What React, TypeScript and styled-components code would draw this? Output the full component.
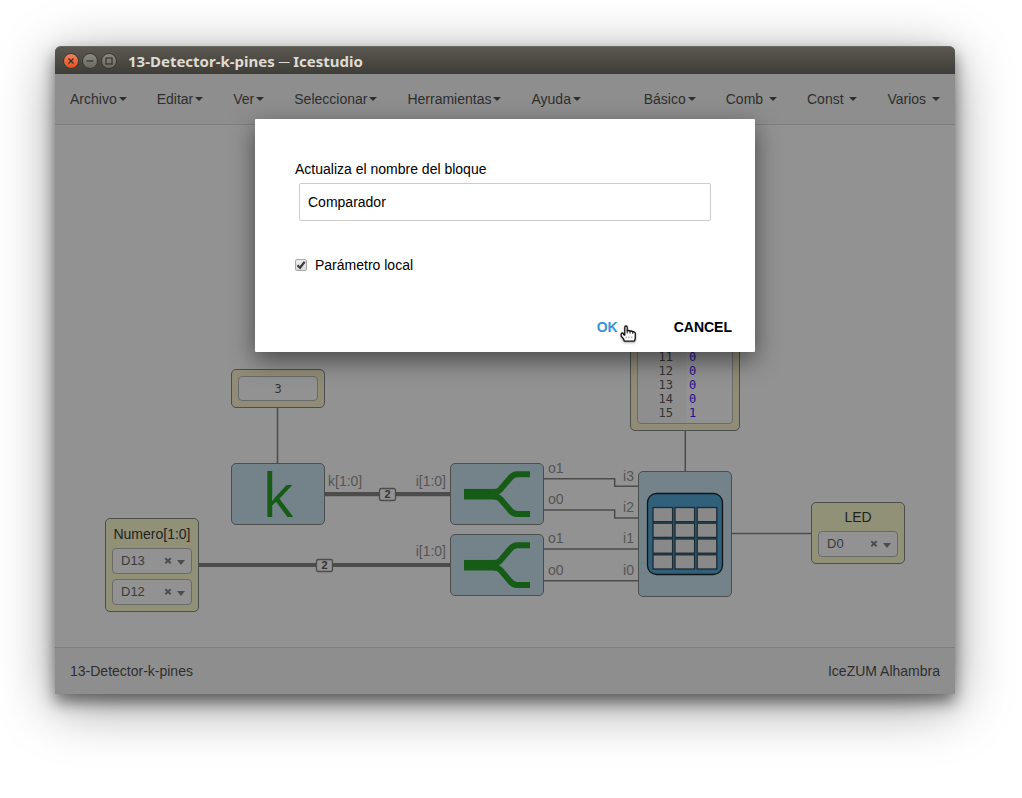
import React, { useState } from "react";
import styled, { createGlobalStyle } from "styled-components";

const GlobalStyle = createGlobalStyle`
  * { box-sizing: border-box; }
  body {
    margin: 0;
    background: #fff;
    font-family: "Liberation Sans", Arial, sans-serif;
    font-size: 14px;
    line-height: 20px;
  }
  button, input, select { font: inherit; }
`;

const Desktop = styled.div`
  display: flex;
  min-height: 100vh;
  padding: 46px 67px 104px 55px;
  overflow: hidden;
`;

const AppWindow = styled.div`
  position: relative;
  display: flex;
  flex: 1;
  flex-direction: column;
  min-width: 0;
  border-radius: 6px 6px 0 0;
  background: #929292;
  box-shadow: 0 8px 16px rgba(0, 0, 0, 0.5), 0 12px 56px rgba(0, 0, 0, 0.4);
`;

const TitleBar = styled.header`
  display: flex;
  align-items: center;
  gap: 3px;
  height: 28px;
  padding: 0 8px;
  border-radius: 6px 6px 0 0;
  border-top: 1px solid #6a6860;
  background: linear-gradient(#5a5850, #3e3d37);
`;

const WindowButton = styled.button<{ $close?: boolean }>`
  display: grid;
  place-items: center;
  width: 16px;
  height: 16px;
  padding: 0;
  border: 1px solid #3a3934;
  border-radius: 50%;
  color: #33322e;
  background: ${(p) => (p.$close ? "linear-gradient(#f3815c, #e2501f)" : "linear-gradient(#8b8a82, #6a6962)")};
`;

const Title = styled.h1`
  margin: 0 0 0 8px;
  color: #dfdbd2;
  font: bold 15px/20px "Noto Sans", "Open Sans", sans-serif;
`;

const MenuBar = styled.nav`
  display: flex;
  justify-content: space-between;
  height: 51px;
  border-bottom: 1px solid #7d7d7d;
  background: #8e8e8e;
`;

const MenuGroup = styled.div`
  display: flex;
`;

const MenuButton = styled.button`
  display: flex;
  align-items: center;
  padding: 0 15px;
  border: 0;
  background: none;
  color: #2e2e2e;
  white-space: pre;
`;

const Caret = styled.span`
  margin-left: 2px;
  border: 4px solid transparent;
  border-top-color: currentColor;
  border-bottom: 0;
`;

const Canvas = styled.main`
  position: relative;
  flex: 1;
  min-height: 522px;
  overflow: hidden;
`;

const Wiring = styled.svg`
  position: absolute;
  left: 0;
  top: 0;
  width: 900px;
  height: 522px;
  font-size: 14px;
`;

const nodeFill = { io: "#909177", constant: "#918c77", block: "#74838a" };

const Node = styled.section<{
  $x: number;
  $y: number;
  $w?: number;
  $h: number;
  $kind: keyof typeof nodeFill;
}>`
  position: absolute;
  left: ${(p) => p.$x}px;
  top: ${(p) => p.$y}px;
  display: flex;
  flex-direction: column;
  align-items: center;
  justify-content: flex-end;
  gap: 5px;
  width: ${(p) => p.$w ?? 94}px;
  height: ${(p) => p.$h}px;
  padding: ${(p) => (p.$kind === "block" ? 0 : 6)}px;
  border: 1px solid #4c4e4e;
  border-radius: 5px;
  background: ${(p) => nodeFill[p.$kind]};
  color: #222;
`;

const NodeName = styled.span`
  line-height: 18px;
  white-space: nowrap;
`;

const ConstantInput = styled.input`
  width: 100%;
  height: 26px;
  padding: 0;
  border: 1px solid #6a6a6a;
  border-radius: 4px;
  background: #929292;
  color: #333;
  text-align: center;
  font: 12px "DejaVu Sans Mono", monospace;
`;

const PinField = styled.div`
  position: relative;
  width: 100%;
  height: 26px;
`;

const PinSelect = styled.select`
  width: 100%;
  height: 26px;
  padding: 0 8px;
  appearance: none;
  border: 1px solid #6a6a6a;
  border-radius: 4px;
  background: #929292;
  color: #3a3a3a;
  font-size: 13px;
`;

const PinTools = styled.div`
  position: absolute;
  right: 7px;
  top: 0;
  display: flex;
  align-items: center;
  gap: 5px;
  height: 26px;
  color: #4c4c4c;
  pointer-events: none;
`;

const ClearButton = styled.button`
  display: flex;
  padding: 0;
  border: 0;
  background: none;
  color: inherit;
`;

const BlockLetter = styled.span`
  width: 100%;
  color: #165c16;
  text-align: center;
  font: 60px/60px "Open Sans", "Noto Sans", sans-serif;
`;

const BlockArt = styled.svg`
  width: 100%;
  height: 100%;
`;

const Memory = styled.div`
  display: grid;
  grid-template-columns: 48px 1fr;
  width: 96px;
  height: 80px;
  padding-bottom: 3px;
  border: 1px solid #6a6a6a;
  border-radius: 4px;
  background: linear-gradient(90deg, #8e8e8e 48px, #929292 48px);
  align-content: end;
  font: 12px/14px "DejaVu Sans Mono", monospace;
`;

const LineNumber = styled.span`
  padding-right: 13px;
  color: #333;
  text-align: right;
`;

const MemoryValue = styled.span`
  padding-left: 3px;
  color: #22118a;
`;

const StatusBar = styled.footer`
  display: flex;
  align-items: center;
  justify-content: space-between;
  height: 47px;
  padding: 0 15px;
  border-top: 1px solid #7d7d7d;
  background: #8e8e8e;
  color: #2e2e2e;
`;

const Dialog = styled.form`
  position: absolute;
  top: 73px;
  left: 50%;
  display: flex;
  flex-direction: column;
  width: 500px;
  padding: 40px 14px 10px 40px;
  border-radius: 1px;
  background: #fff;
  color: #000;
  box-shadow: 0 8px 24px rgba(0, 0, 0, 0.5);
  transform: translateX(-50%);
`;

const NameInput = styled.input`
  width: 412px;
  height: 38px;
  margin: 4px 4px 34px;
  padding: 0 8px;
  border: 1px solid #ccc;
  border-radius: 2px;
  outline: 0;
  color: #000;
`;

const CheckLabel = styled.label`
  display: flex;
  align-items: center;
  gap: 8px;
`;

const CheckBox = styled.input`
  width: 12px;
  height: 12px;
  margin: 0;
  appearance: none;
  border: 1px solid #a8a8a8;
  border-radius: 2px;
  background: linear-gradient(#eee, #dcdcdc);
`;

const CheckSlot = styled.span`
  display: grid;
  place-items: center;

  > * { grid-area: 1 / 1; }
  svg { pointer-events: none; }
`;

const Actions = styled.div`
  display: flex;
  justify-content: flex-end;
  gap: 38px;
  margin-top: 37px;
`;

const ActionButton = styled.button<{ $primary?: boolean }>`
  padding: 5px 9px;
  border: 0;
  background: none;
  color: ${(p) => (p.$primary ? "#3594d6" : "#000")};
  font-weight: bold;
  line-height: 20px;
`;

const Pointer = styled.svg`
  position: absolute;
  left: 365px;
  top: 206px;
  width: 18px;
  height: 18px;
  filter: drop-shadow(0 1px 1px rgba(0, 0, 0, 0.35));
  pointer-events: none;
`;

const Menu = ({ label }: { label: string }) => (
  <MenuButton type="button">
    {label}
    <Caret />
  </MenuButton>
);

const Pin = ({ value, label }: { value: string; label: string }) => (
  <PinField>
    <PinSelect aria-label={label} defaultValue={value}>
      <option>{value}</option>
    </PinSelect>
    <PinTools>
      <ClearButton type="button" aria-label="×">
        <svg width="8" height="8" viewBox="0 0 8 8">
          <path d="M1.3 1.3 6.7 6.2M6.7 1.3 1.3 6.2" stroke="currentColor" strokeWidth="1.9" />
        </svg>
      </ClearButton>
      <svg width="8" height="8" viewBox="0 0 8 8">
        <path d="M0 3h8L4 8z" fill="currentColor" />
      </svg>
    </PinTools>
  </PinField>
);

const SplitArt = () => (
  <BlockArt viewBox="0 0 92 60">
    <path d="M13 30.2H45" stroke="#165c16" strokeWidth="10.6" />
    <path
      d="M42 27.9H44Q47 27.9 49.5 25.3L58.5 14.8Q62 10.3 66 10.3H79M42 32.5H44Q47 32.5 49.5 35.1L58.5 45.6Q62 50.1 66 50.1H79"
      fill="none"
      stroke="#165c16"
      strokeWidth="6"
    />
  </BlockArt>
);

const TableArt = () => (
  <BlockArt viewBox="0 0 92 124">
    <rect x="8.5" y="21.5" width="75" height="81" rx="9" fill="#30607a" stroke="#101416" strokeWidth="1.3" />
    {[35.5, 51.2, 67, 82.8].map((y) =>
      [14, 36, 58.2].map((x) => (
        <rect key={`${x}-${y}`} x={x} y={y} width="19.6" height="14.2" fill="#898989" stroke="#1d2a31" strokeWidth="1.3" />
      )),
    )}
  </BlockArt>
);

const ports = [
  { text: "k[1:0]", x: 273, y: 361 },
  { text: "i[1:0]", x: 391, y: 361, end: true },
  { text: "i[1:0]", x: 391, y: 431, end: true },
  { text: "o1", x: 493, y: 348 },
  { text: "o0", x: 493, y: 379 },
  { text: "o1", x: 493, y: 418 },
  { text: "o0", x: 493, y: 450 },
  { text: "i3", x: 579, y: 356, end: true },
  { text: "i2", x: 579, y: 387, end: true },
  { text: "i1", x: 579, y: 418, end: true },
  { text: "i0", x: 579, y: 450, end: true },
];

const badges = [
  { x: 324, y: 363 },
  { x: 261, y: 434 },
];

const memory = [
  [11, 0],
  [12, 0],
  [13, 0],
  [14, 0],
  [15, 1],
];

export default function App() {
  const [name, setName] = useState("Comparador");
  const [local, setLocal] = useState(true);

  return (
    <>
      <GlobalStyle />
      <Desktop>
        <AppWindow>
          <TitleBar>
            <WindowButton $close type="button" aria-label="Cerrar">
              <svg width="8" height="8" viewBox="0 0 8 8"><path d="M1.5 1.5l5 5m0-5l-5 5" stroke="currentColor" strokeWidth="1.3" /></svg>
            </WindowButton>
            <WindowButton type="button" aria-label="Minimizar">
              <svg width="8" height="8" viewBox="0 0 8 8"><path d="M0.5 4h7" stroke="currentColor" strokeWidth="1.2" /></svg>
            </WindowButton>
            <WindowButton type="button" aria-label="Maximizar">
              <svg width="8" height="8" viewBox="0 0 8 8"><rect x="1" y="1" width="6" height="6" fill="none" stroke="currentColor" strokeWidth="1.2" /></svg>
            </WindowButton>
            <Title>13-Detector-k-pines ─ Icestudio</Title>
          </TitleBar>

          <MenuBar>
            <MenuGroup>
              {["Archivo", "Editar", "Ver", "Seleccionar", "Herramientas", "Ayuda"].map((m) => (
                <Menu key={m} label={m} />
              ))}
            </MenuGroup>
            <MenuGroup>
              {["Básico", "Comb ", "Const ", "Varios "].map((m) => (
                <Menu key={m} label={m} />
              ))}
            </MenuGroup>
          </MenuBar>

          <Canvas>
            <Wiring viewBox="0 0 900 522">
              <g fill="none" stroke="#4c4c4c" strokeWidth="1.5">
                <path d="M222.5 283V338M630.3 306V346M677 408.5H756" />
                <path d="M489 353.7H559.7V361.3H583M489 385H559.7V393H583M489 424H583M489 455.7H583" />
              </g>
              <path d="M270 369.2H395M144 440H395" stroke="#4c4c4c" strokeWidth="4.2" />
              {badges.map((b) => (
                <g key={b.x}>
                  <rect x={b.x + 0.5} y={b.y + 0.5} width="16" height="12" rx="2" fill="#929292" stroke="#4c4c4c" strokeWidth="1.3" />
                  <text x={b.x + 8.5} y={b.y + 10} textAnchor="middle" fontSize="11" fontWeight="bold" fill="#333">2</text>
                </g>
              ))}
              <g fill="#555">
                {ports.map((p) => (
                  <text key={`${p.x}-${p.y}`} x={p.x} y={p.y} textAnchor={p.end ? "end" : "start"}>{p.text}</text>
                ))}
              </g>
            </Wiring>

            <Node $kind="constant" $x={176} $y={244} $h={39}>
              <ConstantInput aria-label="k" defaultValue="3" />
            </Node>
            <Node $kind="block" $x={176} $y={338} $h={62}>
              <BlockLetter>k</BlockLetter>
            </Node>
            <Node $kind="io" $x={50} $y={393} $h={94}>
              <NodeName>Numero[1:0]</NodeName>
              <Pin value="D13" label="Numero[1]" />
              <Pin value="D12" label="Numero[0]" />
            </Node>
            <Node $kind="block" $x={395} $y={338} $h={62}><SplitArt /></Node>
            <Node $kind="block" $x={395} $y={409} $h={62}><SplitArt /></Node>
            <Node $kind="constant" $x={575} $y={214} $w={110} $h={92}>
              <Memory>
                {memory.map(([line, value]) => (
                  <React.Fragment key={line}>
                    <LineNumber>{line}</LineNumber>
                    <MemoryValue>{value}</MemoryValue>
                  </React.Fragment>
                ))}
              </Memory>
            </Node>
            <Node $kind="block" $x={583} $y={346} $h={126}><TableArt /></Node>
            <Node $kind="io" $x={756} $y={377} $h={62}>
              <NodeName>LED</NodeName>
              <Pin value="D0" label="LED" />
            </Node>
          </Canvas>

          <StatusBar>
            <span>13-Detector-k-pines</span>
            <span>IceZUM Alhambra</span>
          </StatusBar>

          <Dialog role="dialog" onSubmit={(e) => e.preventDefault()}>
            <label htmlFor="block-name">Actualiza el nombre del bloque</label>
            <NameInput id="block-name" value={name} onChange={(e) => setName(e.target.value)} />
            <CheckLabel>
              <CheckSlot>
                <CheckBox type="checkbox" checked={local} onChange={(e) => setLocal(e.target.checked)} />
                {local && (
                  <svg width="10" height="10" viewBox="0 0 10 10">
                    <path d="M1.5 5.2 4 7.8 8.7 1.8" fill="none" stroke="#3f3f3f" strokeWidth="2.2" />
                  </svg>
                )}
              </CheckSlot>
              Parámetro local
            </CheckLabel>
            <Actions>
              <ActionButton $primary type="submit">OK</ActionButton>
              <ActionButton type="button">CANCEL</ActionButton>
            </Actions>
            <Pointer viewBox="0 0 18 18">
              <path
                d="M4.8 8.5V2.2a1.2 1.2 0 0 1 2.4 0V5.8q1.6-.8 2.8.4 1.6-.6 2.8.6 1.6-.2 2.5 1.2V13.5L14.3 16.2H4.2L3.6 14 1.2 11.2V9q0-1 1-1 1.2 0 1.6 1.8L4.8 10z"
                fill="#fff"
                stroke="#111"
                strokeWidth="1.3"
                strokeLinejoin="round"
              />
              <path d="M7.2 5.5v3M10 6v2.5M12.8 6.6V8.8" stroke="#111" strokeWidth="1" />
              <path d="M5.5 12.2h8" stroke="#888" strokeDasharray="1.5 1.2" />
            </Pointer>
          </Dialog>
        </AppWindow>
      </Desktop>
    </>
  );
}
